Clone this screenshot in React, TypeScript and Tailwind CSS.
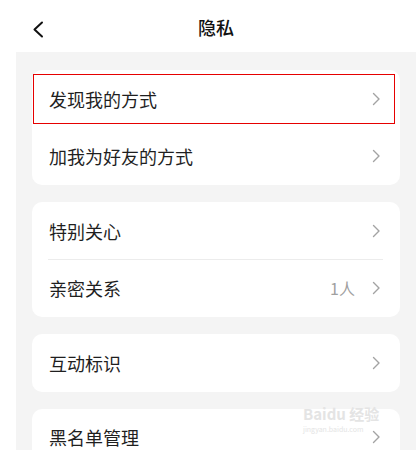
import React from "react";

const font = { fontFamily: '"Noto Sans CJK SC", "Noto Sans", sans-serif' };

function Chevron() {
  return (
    <svg width="9" height="14" viewBox="0 0 9 14" fill="none">
      <path d="M1.5 1.5 L7 7 L1.5 12.5" stroke="#a3a3a3" strokeWidth="1.4" strokeLinecap="round" strokeLinejoin="round" />
    </svg>
  );
}

function Row({ label, extra, divider }: { label: string; extra?: string; divider?: boolean }) {
  return (
    <div className="relative flex h-[57.5px] items-center pl-[17px] pr-[19px]">
      <span className="flex-1 text-[18px] leading-none text-[#1f1f1f]">{label}</span>
      {extra && <span className="mr-[17px] text-[16px] leading-none text-[#a0a0a0]">{extra}</span>}
      <Chevron />
      {divider && <div className="absolute bottom-0 left-[16px] right-[17px] h-px bg-[#ececec]" />}
    </div>
  );
}

export default function App() {
  return (
    <div className="relative h-[450px] w-[420px] overflow-hidden bg-white" style={font}>
      <div className="relative ml-[16px] mr-[4px] flex h-[52px] items-center justify-center pt-[3px]">
        <svg className="absolute left-[16px] top-[21px]" width="12" height="17" viewBox="0 0 12 17" fill="none">
          <path d="M10 1.5 L2.5 8.5 L10 15.5" stroke="#111" strokeWidth="2" strokeLinecap="round" strokeLinejoin="round" />
        </svg>
        <span className="text-[18px] font-medium text-[#111]">隐私</span>
      </div>
      <div className="ml-[16px] mr-[4px] flex h-[398px] flex-col gap-[17px] bg-[#f4f4f4] px-[16px] pt-[18px]">
        <div className="rounded-[10px] bg-white">
          <Row label="发现我的方式" />
          <Row label="加我为好友的方式" />
        </div>
        <div className="rounded-[10px] bg-white">
          <Row label="特别关心" divider />
          <Row label="亲密关系" extra="1人" />
        </div>
        <div className="rounded-[10px] bg-white">
          <Row label="互动标识" />
        </div>
        <div className="rounded-[10px] bg-white">
          <Row label="黑名单管理" />
        </div>
      </div>
      <div className="absolute left-[33px] top-[74px] h-[50px] w-[362px] border border-[#e60000]" />
      <div className="pointer-events-none absolute left-[303px] top-[404px] w-[90px] text-[#e4e4e4]">
        <div className="h-[20px] text-[15px] font-bold leading-[20px]">Baidu 经验</div>
        <div className="h-[10px] text-[7px] leading-[10px]">jingyan.baidu.com</div>
      </div>
    </div>
  );
}
